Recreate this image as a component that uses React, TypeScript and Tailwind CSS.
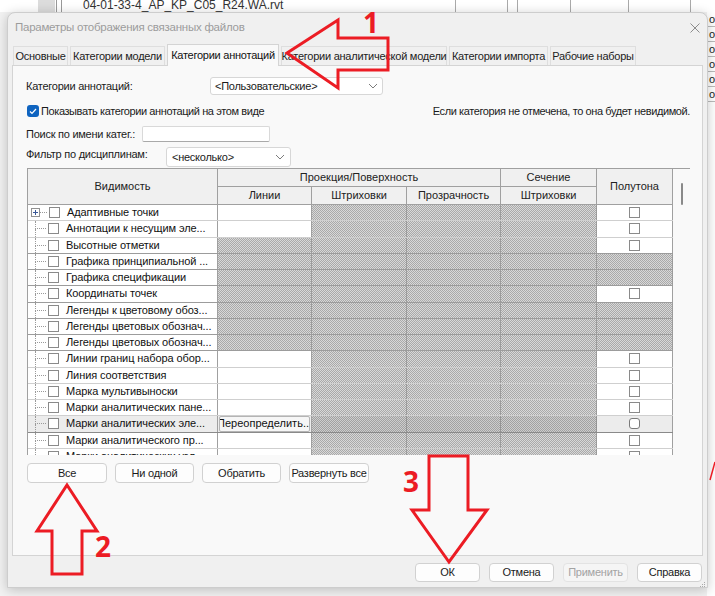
import React from 'react';

type Row = {
  name: string;
  lines: 'w' | 'h' | 'btn';
  half: 'c' | 'h';
  sel?: boolean;
  plus?: boolean;
};

const rows: Row[] = [
  { name: 'Адаптивные точки', lines: 'w', half: 'c', plus: true },
  { name: 'Аннотации к несущим эле...', lines: 'w', half: 'c' },
  { name: 'Высотные отметки', lines: 'h', half: 'c' },
  { name: 'Графика принципиальной ...', lines: 'h', half: 'h' },
  { name: 'Графика спецификации', lines: 'h', half: 'h' },
  { name: 'Координаты точек', lines: 'h', half: 'c' },
  { name: 'Легенды к цветовому обоз...', lines: 'h', half: 'h' },
  { name: 'Легенды цветовых обознач...', lines: 'h', half: 'h' },
  { name: 'Легенды цветовых обознач...', lines: 'h', half: 'h' },
  { name: 'Линии границ набора обор...', lines: 'w', half: 'c' },
  { name: 'Линия соответствия', lines: 'w', half: 'c' },
  { name: 'Марка мультивыноски', lines: 'w', half: 'c' },
  { name: 'Марки аналитических пане...', lines: 'w', half: 'c' },
  { name: 'Марки аналитических эле...', lines: 'btn', half: 'c', sel: true },
  { name: 'Марки аналитического пр...', lines: 'w', half: 'c' },
  { name: 'Марки аналитических узл...', lines: 'w', half: 'c' },
];

const tabs = [
  { label: 'Основные', w: 'w-[55px]' },
  { label: 'Категории модели', w: 'w-[95px]' },
  { label: 'Категории аннотаций', w: 'w-[112px]', active: true },
  { label: 'Категории аналитической модели', w: 'w-[166px]' },
  { label: 'Категории импорта', w: 'w-[99px]' },
  { label: 'Рабочие наборы', w: 'w-[86px]' },
];

// checker fill used by Revit for cells that can't be overridden
const hatch = 'bg-[image:repeating-conic-gradient(#a9a9a9_0_25%,#d8d8d8_0_50%)] bg-[length:2px_2px]';

function Chevron() {
  return (
    <svg width="10" height="6" viewBox="0 0 10 6">
      <path d="M1 1l4 4 4-4" fill="none" stroke="#7c7c7c" strokeWidth="1" />
    </svg>
  );
}

function Box({ round = false }: { round?: boolean }) {
  return (
    <div
      className={`w-[11px] h-[11px] shrink-0 border bg-white ${
        round ? 'rounded-[3px] border-[#7a7a7a]' : 'border-[#8a8a8a]'
      }`}
    />
  );
}

function Btn({ children, className = '', disabled = false }: { children: React.ReactNode; className?: string; disabled?: boolean }) {
  return (
    <div
      className={`flex items-center justify-center whitespace-nowrap rounded-[4px] border ${
        disabled ? 'border-[#e3e3e3] bg-[#f5f5f5] text-[#a3a3a3]' : 'border-[#d1d1d1] bg-[#fdfdfd] text-[#1b1b1b]'
      } ${className}`}
    >
      {children}
    </div>
  );
}

function TreeCell({ row }: { row: Row }) {
  return (
    <div className={`flex items-center w-[190px] shrink-0 h-full overflow-hidden border-r border-[#a0a0a0] ${row.sel ? 'bg-[#ececec]' : 'bg-white'}`}>
      {row.plus ? (
        <div className="flex items-center ml-[3px] shrink-0">
          <div className="relative w-[9px] h-[9px] border border-[#919191] bg-white flex items-center justify-center">
            <div className="w-[5px] h-px bg-[#3b5998]" />
            <div className="absolute w-px h-[5px] bg-[#3b5998]" />
          </div>
          <div className="w-[7px] border-t border-dotted border-[#9a9a9a]" />
        </div>
      ) : (
        <div className="flex flex-col w-[11px] shrink-0 h-full ml-[7px]">
          <div className="flex-1 border-l border-b border-dotted border-[#9a9a9a]" />
          <div className="flex-1 border-l border-dotted border-[#9a9a9a]" />
        </div>
      )}
      <div className="ml-[2px] shrink-0">
        <Box />
      </div>
      <span className="ml-[7px] whitespace-nowrap leading-none tracking-[-0.1px]">{row.name}</span>
    </div>
  );
}

function HatchCell({ w, sel }: { w: string; sel?: boolean }) {
  return <div className={`${w} shrink-0 h-full border-r border-[#9c9c9c] ${hatch} ${sel ? 'brightness-95' : ''}`} />;
}

function BodyRow({ row }: { row: Row }) {
  const line = row.sel ? 'border-[#8a8a8a]' : row.lines === 'w' ? 'border-[#cfcfcf]' : 'border-[#9c9c9c]';
  return (
    <div className={`flex h-[16.25px] shrink-0 border-b ${line} text-[#111]`}>
      <TreeCell row={row} />
      {row.lines === 'w' && <div className="w-[94px] shrink-0 h-full bg-white border-r border-[#a0a0a0]" />}
      {row.lines === 'h' && <HatchCell w="w-[94px]" />}
      {row.lines === 'btn' && (
        <div className="w-[94px] shrink-0 h-full bg-[#ececec] border-r border-[#a0a0a0] flex">
          <div className="flex-1 flex justify-end items-center overflow-hidden ml-[1px] mr-[1px] border border-[#b4b4b4] bg-[#f6f6f6] rounded-[2px]">
            <span className="whitespace-nowrap leading-none">Переопределить..</span>
          </div>
        </div>
      )}
      <HatchCell w="w-[95px]" sel={row.sel} />
      <HatchCell w="w-[94px]" sel={row.sel} />
      <HatchCell w="w-[96px]" sel={row.sel} />
      {row.half === 'c' ? (
        <div className={`w-[76px] shrink-0 h-full border-r border-[#a0a0a0] flex items-center justify-center ${row.sel ? 'bg-[#ececec]' : 'bg-white'}`}>
          <Box round={row.sel} />
        </div>
      ) : (
        <HatchCell w="w-[76px]" />
      )}
    </div>
  );
}

function Table() {
  const hc = 'flex items-center justify-center border-r border-b border-[#a0a0a0] text-[#222]';
  return (
    <div className="flex ml-[1px] mt-[1px] w-[663px] h-[287px] shrink-0 border-t border-[#a0a0a0] tracking-normal">
      <div className="flex flex-col w-[646px] border-l border-[#a0a0a0] overflow-hidden">
        <div className="grid grid-cols-[190px_94px_95px_94px_96px_76px] grid-rows-[18px_18px] bg-[#f0f0f0] shrink-0">
          <div className={`${hc} row-span-2`}>Видимость</div>
          <div className={`${hc} col-span-3`}>Проекция/Поверхность</div>
          <div className={hc}>Сечение</div>
          <div className={`${hc} row-span-2`}>Полутона</div>
          <div className={hc}>Линии</div>
          <div className={hc}>Штриховки</div>
          <div className={hc}>Прозрачность</div>
          <div className={hc}>Штриховки</div>
        </div>
        <div className="flex flex-col overflow-hidden">
          {rows.map((r, i) => (
            <BodyRow key={i} row={r} />
          ))}
        </div>
      </div>
      <div className="w-[17px] pt-[14px] flex justify-center">
        <div className="w-[2px] h-[22px] rounded-full bg-[#8a8a8a] ml-[1px]" />
      </div>
    </div>
  );
}

function Dialog() {
  return (
    <div className="absolute left-[7px] top-[12px] w-[701px] h-[576px] flex flex-col bg-[#f0f0f0] border border-[#cdcdcd] rounded-t-[8px] shadow-[0_2px_12px_rgba(0,0,0,0.22)] tracking-[-0.25px]">
      <div className="h-[29px] flex items-center justify-between pl-[7px] pr-[7px] shrink-0">
        <span className="text-[#9c9c9c] leading-none text-[11.5px]">Параметры отображения связанных файлов</span>
        <svg width="10" height="10" viewBox="0 0 10 10">
          <path d="M0.5 0.5l9 9M9.5 0.5l-9 9" stroke="#8c8c8c" strokeWidth="1" />
        </svg>
      </div>
      <div className="flex items-end gap-[2px] h-[23px] pl-[5px] shrink-0">
        {tabs.map((t) =>
          t.active ? (
            <div
              key={t.label}
              className={`${t.w} h-[22px] -mb-px z-10 flex items-center justify-center bg-[#f9f9f9] border border-b-0 border-[#d4d4d4] text-[#111] whitespace-nowrap`}
            >
              {t.label}
            </div>
          ) : (
            <div
              key={t.label}
              className={`${t.w} h-[19px] flex items-center justify-center bg-[#f0f0f0] border border-b-0 border-[#dedede] text-[#222] whitespace-nowrap`}
            >
              {t.label}
            </div>
          )
        )}
      </div>
      <div className="mx-[4px] h-[491px] shrink-0 border border-[#d4d4d4] bg-[#f9f9f9] flex flex-col pl-[13px] text-[#1b1b1b] whitespace-nowrap">
        <div className="flex items-center mt-[11px] h-[18px]">
          <span className="w-[184px]">Категории аннотаций:</span>
          <div className="w-[173px] h-[18px] flex items-center justify-between pl-[4px] pr-[4px] bg-white border border-[#d7d7d7] rounded-[3px]">
            <span>&lt;Пользовательские&gt;</span>
            <Chevron />
          </div>
        </div>
        <div className="flex items-center justify-between mt-[10px] h-[12px] pr-[12px] tracking-[-0.4px]">
          <div className="flex items-center">
            <div className="ml-[1px] w-[12px] h-[12px] rounded-[3px] bg-[#0f64c0] flex items-center justify-center">
              <svg width="8" height="7" viewBox="0 0 8 7">
                <path d="M1 3.5l2 2 4-4.5" fill="none" stroke="#fff" strokeWidth="1.2" />
              </svg>
            </div>
            <span className="ml-[2px]">Показывать категории аннотаций на этом виде</span>
          </div>
          <span>Если категория не отмечена, то она будет невидимой.</span>
        </div>
        <div className="flex items-center mt-[9px] h-[16px]">
          <span className="w-[116px]">Поиск по имени катег.:</span>
          <div className="w-[128px] h-[16px] bg-white border border-[#d9d9d9] border-b-[#a9a9a9] rounded-[2px]" />
        </div>
        <div className="flex items-start mt-[5px] h-[20px]">
          <span className="w-[140px] leading-[14px]">Фильтр по дисциплинам:</span>
          <div className="w-[125px] h-[20px] flex items-center justify-between pl-[5px] pr-[5px] bg-white border border-[#d7d7d7] rounded-[3px]">
            <span>&lt;несколько&gt;</span>
            <Chevron />
          </div>
        </div>
        <Table />
        <div className="flex gap-[8px] mt-[8px] ml-[1px] h-[20px]">
          <Btn className="w-[80px]">Все</Btn>
          <Btn className="w-[79px]">Ни одной</Btn>
          <Btn className="w-[79px]">Обратить</Btn>
          <Btn className="w-[80px]">Развернуть все</Btn>
        </div>
      </div>
      <div className="flex justify-end gap-[9px] mt-[7px] pr-[5px] h-[19px]">
        <Btn className="w-[65px]">ОК</Btn>
        <Btn className="w-[65px]">Отмена</Btn>
        <Btn className="w-[65px]" disabled>
          Применить
        </Btn>
        <Btn className="w-[65px]">Справка</Btn>
      </div>
      <div className="flex justify-end pr-[1px] mt-auto mb-[1px]">
        <svg width="6" height="6" viewBox="0 0 6 6">
          <rect x="4" y="0" width="1" height="1" fill="#aaa" />
          <rect x="2" y="2" width="1" height="1" fill="#aaa" />
          <rect x="4" y="2" width="1" height="1" fill="#aaa" />
          <rect x="0" y="4" width="1" height="1" fill="#aaa" />
          <rect x="2" y="4" width="1" height="1" fill="#aaa" />
          <rect x="4" y="4" width="1" height="1" fill="#aaa" />
        </svg>
      </div>
    </div>
  );
}

function Backdrop() {
  return (
    <div className="flex flex-col h-full">
      <div className="h-[12px] bg-white flex items-end overflow-hidden text-[#333] leading-none">
        <div className="w-[38px] h-full shrink-0" />
        <div className="w-[17px] h-full shrink-0 bg-[#dcdcdc]" />
        <div className="w-[2px] h-full shrink-0 border-r border-[#999]" />
        <div className="w-[5px] h-full shrink-0 border-r border-[#999]" />
        <span className="ml-[21px] mb-[1px] whitespace-nowrap text-[12px]">04-01-33-4_AP_KP_C05_R24.WA.rvt</span>
        <div className="w-[173px] h-full shrink-0 border-r border-[#aaa]" />
        <div className="w-[52px] h-full shrink-0 border-r border-[#aaa]" />
        <div className="w-[10px] h-full shrink-0 border-r border-[#aaa]" />
        <div className="w-[53px] h-full shrink-0 border-r border-[#aaa]" />
        <div className="w-[58px] h-full shrink-0 border-r border-[#aaa]" />
        <div className="w-[62px] h-full shrink-0 border-r border-[#aaa]" />
      </div>
      <div className="flex-1 flex justify-end bg-[#f2f2f2]">
        <div className="w-[8px] bg-white flex flex-col leading-none text-[#222] overflow-hidden">
          {['о', 'о', 'о', 'о', 'о', 'о'].map((c, i) => (
            <div key={i} className="h-[15px] border-b border-[#bbb] pl-[2px] flex items-center">
              {c}
            </div>
          ))}
        </div>
      </div>
    </div>
  );
}

function Annotations() {
  const red = '#ec1c24';
  return (
    <>
      <svg className="absolute inset-0 pointer-events-none" width="715" height="596" viewBox="0 0 715 596">
        <polygon points="287,53 338,20 338,38 388,38 388,70 338,70 338,88" fill="none" stroke={red} strokeWidth="3" />
        <polygon points="67,485 97,531 82,531 82,574 52,574 52,531 37,531" fill="none" stroke={red} strokeWidth="3" />
        <polygon points="429,456 468,456 468,510 487,510 449,562 412,510 429,510" fill="none" stroke={red} strokeWidth="3" />
        <path d="M715 462l-5 18" stroke={red} strokeWidth="1.5" />
      </svg>
      <span className="absolute left-[363px] top-[8px] text-[28px] font-bold leading-none text-[#ec1c24] font-['Noto_Sans',sans-serif]">1</span>
      <span className="absolute left-[95px] top-[532px] text-[28px] font-bold leading-none text-[#ec1c24] font-['Noto_Sans',sans-serif]">2</span>
      <span className="absolute left-[403px] top-[467px] text-[28px] font-bold leading-none text-[#ec1c24] font-['Noto_Sans',sans-serif]">3</span>
    </>
  );
}

export default function App() {
  return (
    <div className="relative w-[715px] h-[596px] overflow-hidden font-['Liberation_Sans',sans-serif] text-[11px]">
      <Backdrop />
      <Dialog />
      <Annotations />
    </div>
  );
}
